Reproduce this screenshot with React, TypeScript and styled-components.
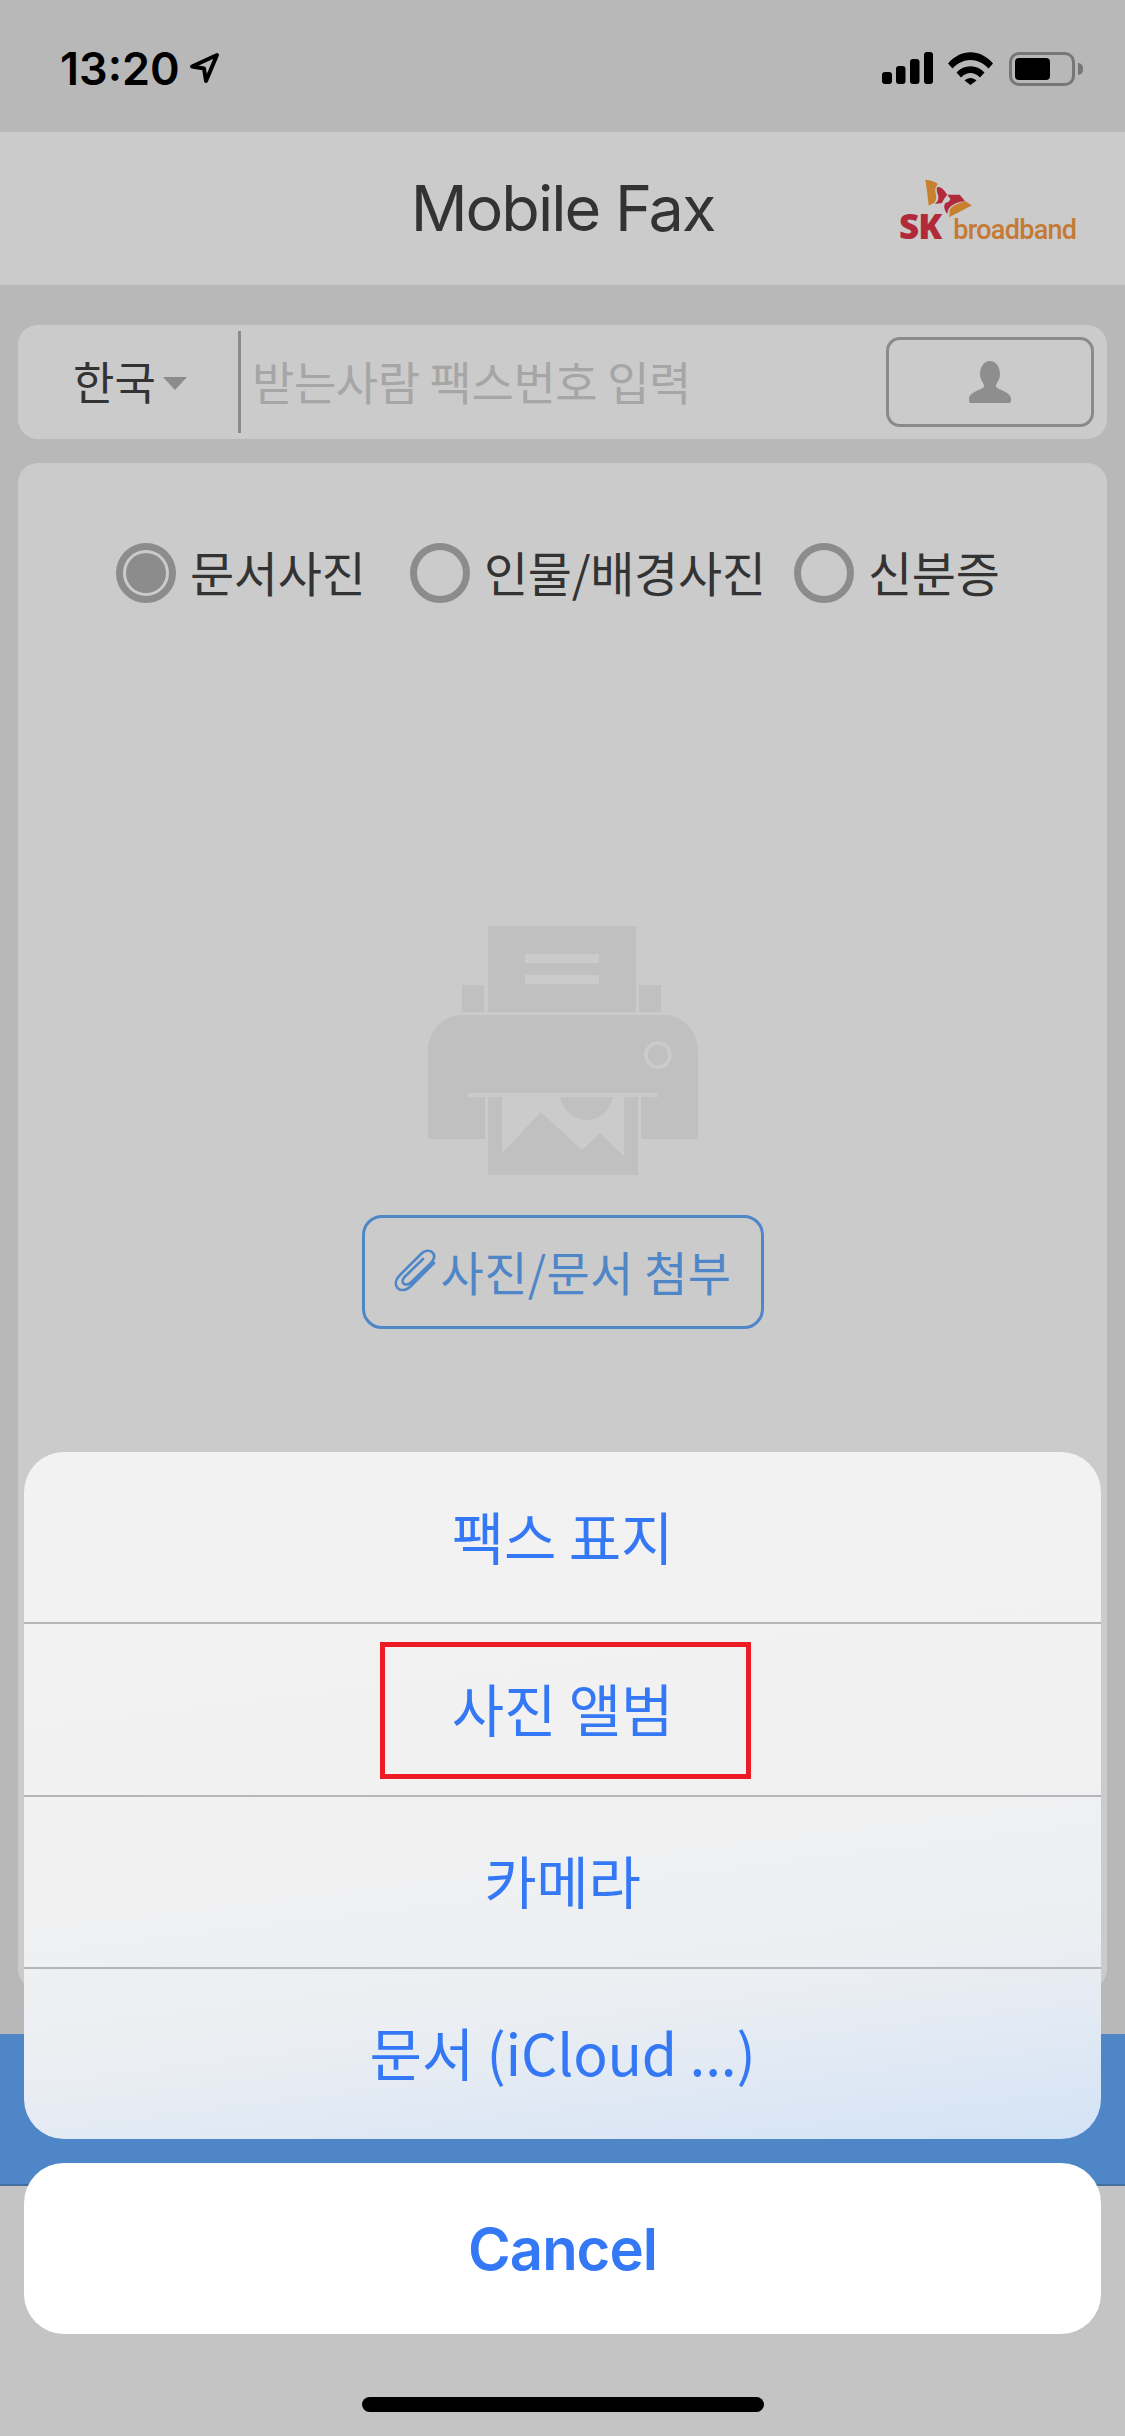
import React from "react";
import styled, { createGlobalStyle } from "styled-components";

const KR = `"Noto Sans CJK KR", "Liberation Sans", sans-serif`;

const GlobalStyle = createGlobalStyle`
  html, body {
    margin: 0;
    padding: 0;
    background: #b8b8b8;
  }
  * {
    box-sizing: border-box;
  }
`;

const Screen = styled.div`
  position: relative;
  width: 1125px;
  height: 2436px;
  display: flex;
  flex-direction: column;
  overflow: hidden;
  background: #b8b8b8;
  font-family: ${KR};
`;

const StatusBar = styled.div`
  height: 132px;
  flex: none;
  display: flex;
  justify-content: space-between;
  padding: 52px 50px 0 60px;
`;

const StatusGroup = styled.div`
  display: flex;
  align-items: flex-start;
`;

const Clock = styled.span`
  font-family: Inter, sans-serif;
  font-size: 45px;
  font-weight: 600;
  line-height: 34px;
  color: #000;
  margin-right: 9px;
`;

const Battery = styled.div`
  width: 66px;
  height: 34px;
  margin-left: 16px;
  padding: 3px;
  border: 3px solid #777;
  border-radius: 10px;
  position: relative;

  &::before {
    content: "";
    display: block;
    width: 35px;
    height: 22px;
    border-radius: 4px;
    background: #000;
  }

  &::after {
    content: "";
    position: absolute;
    right: -11px;
    top: 8px;
    width: 5px;
    height: 12px;
    border-radius: 0 6px 6px 0;
    background: #777;
  }
`;

const Header = styled.header`
  height: 153px;
  flex: none;
  display: grid;
  grid-template-columns: 1fr auto 1fr;
  align-items: center;
  padding: 0 49px;
  background: #cbcbcb;
`;

const Title = styled.h1`
  grid-column: 2;
  margin: 0;
  font-family: Inter, sans-serif;
  font-size: 63px;
  font-weight: 400;
  line-height: 1;
  letter-spacing: -2px;
  color: #333;
`;

const Logo = styled.div`
  grid-column: 3;
  justify-self: end;
  display: flex;
  flex-direction: column;
  width: 177px;
  margin-top: 6px;
`;

const LogoMark = styled.svg`
  width: 48px;
  height: 40px;
  margin-left: 26px;
  margin-bottom: -8px;
  display: block;
`;

const LogoWords = styled.div`
  display: flex;
  align-items: baseline;
  line-height: 30px;
`;

const LogoSK = styled.span`
  font-family: "Open Sans", sans-serif;
  font-size: 35px;
  font-weight: 800;
  letter-spacing: -1px;
  color: #b02a3a;
  margin-right: 12px;
`;

const LogoBroadband = styled.span`
  font-family: Roboto, sans-serif;
  font-size: 27px;
  font-weight: 500;
  letter-spacing: -0.7px;
  color: #c47a35;
`;

const Body = styled.main`
  flex: 1;
  display: flex;
  flex-direction: column;
  gap: 24px;
  padding: 40px 18px 45px;
`;

const SearchRow = styled.div`
  height: 114px;
  flex: none;
  display: flex;
  align-items: center;
  background: #cbcbcb;
  border-radius: 20px;
  padding-right: 13px;
`;

const Country = styled.div`
  width: 223px;
  height: 102px;
  flex: none;
  display: flex;
  align-items: center;
  padding: 0 0 3px 55px;
  border-right: 3px solid #8c8c8c;
  font-size: 45px;
  color: #333;
`;

const Caret = styled.span`
  width: 0;
  height: 0;
  margin-left: 7px;
  margin-top: 6px;
  border-left: 12px solid transparent;
  border-right: 12px solid transparent;
  border-top: 13px solid #8c8c8c;
`;

const Placeholder = styled.div`
  flex: 1;
  padding: 0 0 4px 11px;
  font-size: 46px;
  letter-spacing: -0.4px;
  color: #a6a6a6;
`;

const ContactButton = styled.div`
  width: 208px;
  height: 90px;
  display: flex;
  align-items: center;
  justify-content: center;
  border: 3px solid #8a8a8a;
  border-radius: 14px;
`;

const Card = styled.section`
  flex: 1;
  display: flex;
  flex-direction: column;
  align-items: center;
  padding-top: 80px;
  background: #cbcbcb;
  border-radius: 20px;
`;

const RadioRow = styled.div`
  display: grid;
  grid-template-columns: 294px 384px auto;
  align-self: flex-start;
  margin-left: 98px;
`;

const RadioItem = styled.label`
  display: flex;
  align-items: center;
  gap: 14px;
  height: 60px;
  font-size: 48px;
  letter-spacing: -0.3px;
  line-height: 56px;
  color: #333;
`;

const RadioLabel = styled.span`
  margin-top: -4px;
`;

const RadioMark = styled.span<{ $checked?: boolean }>`
  width: 60px;
  height: 60px;
  flex: none;
  border: 7px solid #8c8c8c;
  border-radius: 50%;
  padding: 3px;

  &::after {
    content: "";
    display: ${({ $checked }) => ($checked ? "block" : "none")};
    width: 100%;
    height: 100%;
    border-radius: 50%;
    background: #8c8c8c;
  }
`;

const PrinterIcon = styled.svg`
  width: 270px;
  height: 249px;
  margin-top: 323px;
  display: block;
`;

const AttachButton = styled.div`
  width: 402px;
  height: 114px;
  margin-top: 40px;
  display: flex;
  align-items: center;
  justify-content: center;
  gap: 5px;
  padding-bottom: 3px;
  border: 3px solid #4f86c8;
  border-radius: 20px;
  font-size: 47px;
  letter-spacing: 0.3px;
  color: #4f86c8;
`;

const SendBar = styled.div`
  height: 152px;
  flex: none;
  background: #4f86c8;
  border-bottom: 2px solid #41709f;
`;

const BottomArea = styled.div`
  height: 250px;
  flex: none;
  background: #c4c4c4;
`;

const Sheet = styled.div`
  position: absolute;
  left: 24px;
  right: 24px;
  bottom: 102px;
  display: flex;
  flex-direction: column;
  gap: 24px;
`;

const ActionGroup = styled.div`
  height: 687px;
  display: flex;
  flex-direction: column;
  border-radius: 40px;
  overflow: hidden;
  background: linear-gradient(
    173deg,
    #f2f2f2 0%,
    #f1f1f1 52%,
    #ebeef2 76%,
    #d3e3f6 100%
  );
`;

const ActionRow = styled.div`
  position: relative;
  flex: 1;
  display: flex;
  align-items: center;
  justify-content: center;
  padding-bottom: 5px;
  font-size: 57px;
  letter-spacing: -0.2px;
  color: #3478f6;

  & + & {
    border-top: 2px solid #b4b6b9;
  }
`;

const Highlight = styled.div`
  position: absolute;
  left: 356px;
  top: 18px;
  width: 371px;
  height: 137px;
  border: 5px solid #ed1c24;
`;

const CancelButton = styled.div`
  height: 171px;
  display: flex;
  align-items: center;
  justify-content: center;
  border-radius: 40px;
  background: #fff;
  font-family: Inter, sans-serif;
  font-size: 58px;
  font-weight: 600;
  letter-spacing: -1px;
  color: #3478f6;
`;

const HomeIndicator = styled.div`
  position: absolute;
  left: 362px;
  bottom: 24px;
  width: 402px;
  height: 15px;
  border-radius: 8px;
  background: #000;
`;

const LocationArrow = () => (
  <svg width="31" height="32" viewBox="0 0 31 32">
    <path
      d="M28 3 L3 14.5 L15 16.5 L17 29 Z"
      fill="none"
      stroke="#000"
      strokeWidth="4"
      strokeLinejoin="round"
    />
  </svg>
);

const SignalIcon = () => (
  <svg width="51" height="32" viewBox="0 0 51 32">
    <rect x="0" y="20" width="10" height="12" rx="3" fill="#000" />
    <rect x="14" y="14" width="9.5" height="18" rx="3" fill="#000" />
    <rect x="28" y="7" width="9.5" height="25" rx="3" fill="#000" />
    <rect x="42" y="0" width="9" height="32" rx="3" fill="#000" />
  </svg>
);

const WifiIcon = () => (
  <svg width="45" height="33" viewBox="0 0 45 33" style={{ marginLeft: 15 }}>
    <path
      d="M0 11.5 C13 -3.5 32 -3.5 45 11.5 L40.5 16.5 C30 5 15 5 4.5 16.5 Z"
      fill="#000"
    />
    <path
      d="M8.5 20.5 C16 12 29 12 36.5 20.5 L32 25.5 C26.5 19.5 18.5 19.5 13 25.5 Z"
      fill="#000"
    />
    <path d="M16.5 28.5 C20 25 25 25 28.5 28.5 L22.5 33 Z" fill="#000" />
  </svg>
);

const PersonIcon = () => (
  <svg width="44" height="42" viewBox="0 0 44 42">
    <path
      d="M22 0 C28 0 32 6 32 13 C32 19 28 22 28 25 C28 29 43 30 43 38 L43 40 Q43 42 41 42 L3 42 Q1 42 1 40 L1 38 C1 30 16 29 16 25 C16 22 12 19 12 13 C12 6 16 0 22 0 Z"
      fill="#8e8e8e"
    />
  </svg>
);

const PaperclipIcon = () => (
  <svg width="42" height="43" viewBox="0 0 42 43">
    <path
      d="M40 14 L17 37 C12 42 6 42 3.5 39 C1 36 1 31 6 26 L27 5 C31 1 36 1 38.5 3.5 C41 6 40.5 10 37 14 L17.5 33 C14.5 36 11 36 9.5 34.5 C8 33 8.5 30 11 27.5 L29 10"
      fill="none"
      stroke="#4f86c8"
      strokeWidth="2.6"
      strokeLinecap="round"
    />
  </svg>
);

const Printer = () => (
  <PrinterIcon viewBox="0 0 270 249">
    <g fill="#c0c0c0">
      <path
        d="M60 0 H208 V86 H60 Z M97 28 V37 H171 V28 Z M97 49 V58 H171 V49 Z"
        fillRule="evenodd"
      />
      <rect x="34" y="59" width="22" height="27" />
      <rect x="211" y="59" width="22" height="27" />
      <path d="M0 213 V126 C0 106 14 89 34 89 H236 C256 89 270 106 270 126 V213 H213 V171 H230 V167 H40 V171 H57 V213 Z" />
      <path d="M60 171 H74 V227 L113 186 L154 224 L172 207 L196 230 V171 H210 V249 H60 Z" />
      <path d="M132 171 H185 C182 185 171 194 158.5 194 C146 194 135 185 132 171 Z" />
    </g>
    <circle cx="230" cy="129" r="12" fill="none" stroke="#cbcbcb" strokeWidth="3.5" />
  </PrinterIcon>
);

const App: React.FC = () => (
  <Screen>
    <GlobalStyle />
    <StatusBar>
      <StatusGroup>
        <Clock>13:20</Clock>
        <LocationArrow />
      </StatusGroup>
      <StatusGroup>
        <SignalIcon />
        <WifiIcon />
        <Battery />
      </StatusGroup>
    </StatusBar>

    <Header>
      <Title>Mobile Fax</Title>
      <Logo>
        <LogoMark viewBox="195 88 145 120">
          <path d="M196 90 Q222 92 234 103 Q222 115 228 135 Q232 150 222 160 L206 168 Q202 125 196 90 Z" fill="#c97f30" />
          <path d="M232 112 Q246 108 262 135 Q250 150 246 160 L225 163 Q240 150 234 135 Q228 122 232 112 Z" fill="#b02a3a" />
          <path d="M262 135 L300 135 L316 155 Q285 155 266 178 L262 193 Q248 175 256 160 Q268 158 272 148 Z" fill="#b02a3a" />
          <path d="M318 155 L336 168 L268 203 L270 180 Q285 160 318 155 Z" fill="#c97f30" />
        </LogoMark>
        <LogoWords>
          <LogoSK>SK</LogoSK>
          <LogoBroadband>broadband</LogoBroadband>
        </LogoWords>
      </Logo>
    </Header>

    <Body>
      <SearchRow>
        <Country>
          한국
          <Caret />
        </Country>
        <Placeholder>받는사람 팩스번호 입력</Placeholder>
        <ContactButton>
          <PersonIcon />
        </ContactButton>
      </SearchRow>

      <Card>
        <RadioRow>
          <RadioItem>
            <RadioMark $checked />
            <RadioLabel>문서사진</RadioLabel>
          </RadioItem>
          <RadioItem>
            <RadioMark />
            <RadioLabel>인물/배경사진</RadioLabel>
          </RadioItem>
          <RadioItem>
            <RadioMark />
            <RadioLabel>신분증</RadioLabel>
          </RadioItem>
        </RadioRow>
        <Printer />
        <AttachButton>
          <PaperclipIcon />
          사진/문서 첨부
        </AttachButton>
      </Card>
    </Body>

    <SendBar />
    <BottomArea />

    <Sheet>
      <ActionGroup>
        <ActionRow>팩스 표지</ActionRow>
        <ActionRow>
          사진 앨범
          <Highlight />
        </ActionRow>
        <ActionRow>카메라</ActionRow>
        <ActionRow>문서 (iCloud ...)</ActionRow>
      </ActionGroup>
      <CancelButton>Cancel</CancelButton>
    </Sheet>
    <HomeIndicator />
  </Screen>
);

export default App;
